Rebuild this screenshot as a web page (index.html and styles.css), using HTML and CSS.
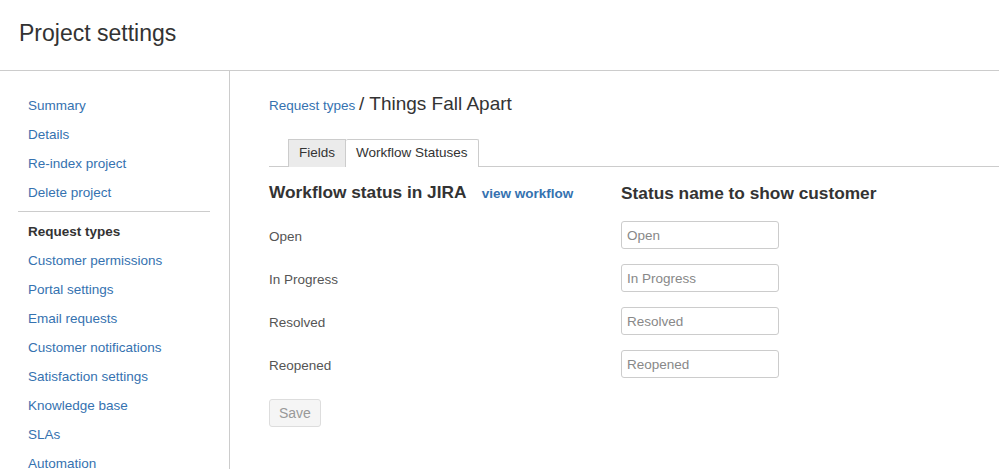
FILE: index.html
```html
<!DOCTYPE html>
<html lang="en">
<head>
  <meta charset="UTF-8">
  <title>Project settings</title>
  <link rel="stylesheet" href="styles.css">
</head>
<body>
<div class="page-header">
  <h1>Project settings</h1>
</div>
<div class="page-body">
  <div class="sidebar">
    <ul class="nav">
      <li><a href="#">Summary</a></li>
      <li><a href="#">Details</a></li>
      <li><a href="#">Re-index project</a></li>
      <li><a href="#">Delete project</a></li>
    </ul>
    <ul class="nav nav-sep">
      <li class="active">Request types</li>
      <li><a href="#">Customer permissions</a></li>
      <li><a href="#">Portal settings</a></li>
      <li><a href="#">Email requests</a></li>
      <li><a href="#">Customer notifications</a></li>
      <li><a href="#">Satisfaction settings</a></li>
      <li><a href="#">Knowledge base</a></li>
      <li><a href="#">SLAs</a></li>
      <li><a href="#">Automation</a></li>
    </ul>
  </div>
  <div class="content">
    <div class="crumbs"><a href="#">Request types</a> <span class="title">/ Things Fall Apart</span></div>
    <ul class="tabs">
      <li>Fields</li>
      <li class="active">Workflow Statuses</li>
    </ul>
    <div class="status-grid">
      <div class="col-head">Workflow status in JIRA <a href="#">view workflow</a></div>
      <div class="col-head">Status name to show customer</div>

      <div class="label">Open</div>
      <div><input type="text" placeholder="Open"></div>
      <div class="label">In Progress</div>
      <div><input type="text" placeholder="In Progress"></div>
      <div class="label">Resolved</div>
      <div><input type="text" placeholder="Resolved"></div>
      <div class="label">Reopened</div>
      <div><input type="text" placeholder="Reopened"></div>
    </div>
    <button class="btn" disabled>Save</button>
  </div>
</div>
</body>
</html>
```

FILE: styles.css
```css
body,div,ul,li,h1{margin:0;padding:0;}
ul{list-style-type:none;}
body{background:#fff;color:#333;font:13.5px/20px "Liberation Sans",Arial,sans-serif;}
a{color:#3572b0;text-decoration:none;}

.page-header{height:70px;border-bottom:1px solid #ccc;padding-left:19px;}
.page-header h1{font-size:23px;font-weight:400;line-height:66px;}

.page-body{display:flex;min-height:398px;}
.sidebar{width:192px;padding:20px 19px 0 18px;border-right:1px solid #ccc;flex:none;}
.nav li{padding-left:10px;line-height:29px;}
.nav-sep{border-top:1px solid #ccc;margin-top:4px;padding-top:5px;}
.nav li.active{font-weight:700;color:#333;}

.content{flex:1;padding:19px 0 0 39px;}
.crumbs{line-height:28px;}
.crumbs .title{font-size:19px;}

.tabs{display:flex;margin-top:19px;padding-left:19px;border-bottom:1px solid #ccc;}
.tabs li{padding:0 10px;line-height:26px;border:1px solid #ccc;border-bottom:0;background:#ebebeb;margin-bottom:-1px;}
.tabs li+li{border-left:0;}
.tabs li.active{background:#fff;border-radius:2px 2px 0 0;padding-bottom:1px;}

.status-grid{display:grid;grid-template-columns:352px 1fr;row-gap:15px;margin-top:12px;align-items:center;}
.col-head{font-size:17.3px;font-weight:700;line-height:24px;white-space:nowrap;padding-top:1px;}
.col-head a{font-size:13.5px;margin-left:11px;}
.label{color:#555;padding-top:3px;}
.status-grid input{display:block;box-sizing:border-box;width:158px;height:28px;border:1px solid #ccc;border-radius:3px;padding:0 5px;font:13.5px "Liberation Sans",Arial,sans-serif;color:#333;}
.status-grid input::placeholder{color:#888;}

.btn{margin-top:21px;height:28px;padding:0 9px;background:#f5f5f5;border:1px solid #ddd;border-radius:3px;color:#999;font:14px "Liberation Sans",Arial,sans-serif;}
```
